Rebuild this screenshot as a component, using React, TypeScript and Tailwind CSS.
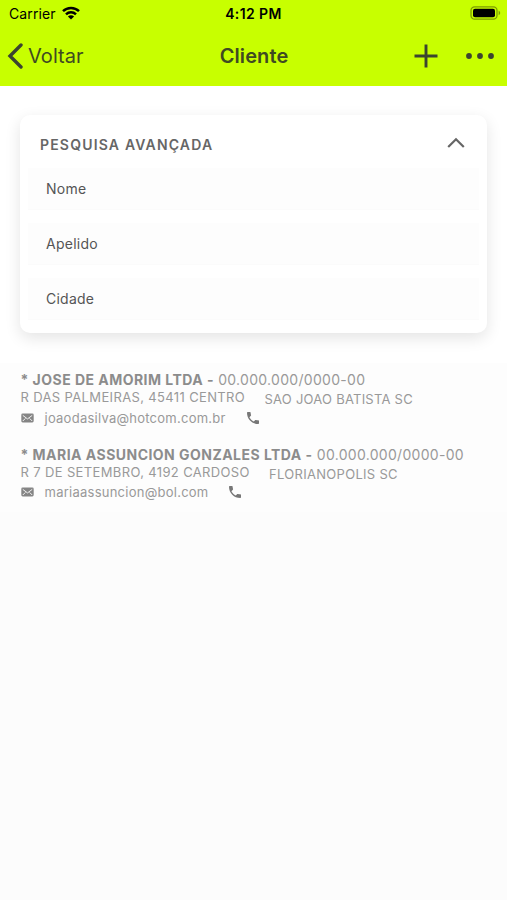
import React from "react";

const clients = [
  {
    name: "* JOSE DE AMORIM LTDA -",
    document: "00.000.000/0000-00",
    address: "R DAS PALMEIRAS, 45411 CENTRO",
    addressStyle: "w-[244px] tracking-[0.36px]",
    city: "SAO JOAO BATISTA SC",
    cityStyle: "tracking-[0.24px]",
    email: "joaodasilva@hotcom.com.br",
    emailStyle: "w-[202px] tracking-[0.25px]",
  },
  {
    name: "* MARIA ASSUNCION GONZALES LTDA -",
    document: "00.000.000/0000-00",
    address: "R 7 DE SETEMBRO, 4192 CARDOSO",
    addressStyle: "w-[248.5px] tracking-[0.36px]",
    city: "FLORIANOPOLIS SC",
    cityStyle: "tracking-[0.3px]",
    email: "mariaassuncion@bol.com",
    emailStyle: "w-[184px] tracking-[0.25px]",
  },
];

const StatusBar = () => (
  <div className="grid h-[27px] grid-cols-3 items-center text-[14px] text-black">
    <div className="flex items-center gap-[6px] pl-[9px]">
      <span className="tracking-[0.1px]">Carrier</span>
      <svg className="mb-[2px]" width="18" height="14" viewBox="0 0 18 14" fill="none" stroke="currentColor" strokeWidth="2.5">
        <path d="M1 5.2C5.4.9 12.6.9 17 5.2" />
        <path d="M4 8.3C6.8 5.6 11.2 5.6 14 8.3" />
        <path d="M9 13.6 5.9 10.5C7.6 8.9 10.4 8.9 12.1 10.5Z" fill="currentColor" stroke="none" />
      </svg>
    </div>
    <span className="text-center font-semibold tracking-[0.4px]">4:12 PM</span>
    <svg className="mr-[6px] mb-[1px] justify-self-end" width="31" height="14" viewBox="0 0 31 14">
      <rect x="1" y=".8" width="26" height="12.4" rx="3.6" fill="none" stroke="#7d9d00" strokeWidth="1.3" />
      <rect x="3" y="2.7" width="22" height="8.6" rx="2" fill="#000" />
      <path d="M28.6 4.8C30.7 5.5 30.7 8.5 28.6 9.2Z" fill="#7d9d00" />
    </svg>
  </div>
);

const NavBar = () => (
  <div className="grid h-[58px] grid-cols-3 items-center text-[#3f4a22]">
    <div className="flex items-center gap-[5px] pl-[7px]">
      <svg width="16" height="26" viewBox="0 0 16 26" fill="none" stroke="#3b4430" strokeWidth="3.4" strokeLinecap="round">
        <path d="M14 2 3 13 14 24" />
      </svg>
      <span className="text-[20px] tracking-[0.05px]">Voltar</span>
    </div>
    <span className="pl-[1px] text-center text-[20px] font-semibold tracking-[0.1px]">Cliente</span>
    <div className="flex items-center gap-[27px] justify-self-end pr-[12px]">
      <svg width="24" height="24" viewBox="0 0 24 24" stroke="#3b4430" strokeWidth="2.9">
        <path d="M12 .5V23.5M.5 12H23.5" />
      </svg>
      <svg width="30" height="8" viewBox="0 0 30 8" fill="#3b4430">
        <circle cx="4" cy="4" r="2.9" />
        <circle cx="15" cy="4" r="2.9" />
        <circle cx="26" cy="4" r="2.9" />
      </svg>
    </div>
  </div>
);

const Field = (props: { label: string }) => (
  <div className="mx-[8px] mb-[13px] flex h-[42px] items-center border-b border-[#fbfbfb] bg-[#fdfdfd] pl-[18px] text-[14px] tracking-[0.25px] text-[#555]">
    {props.label}
  </div>
);

const SearchCard = () => (
  <div className="mx-[20px] mt-[29px] h-[218px] rounded-[10px] bg-white shadow-[0_5px_16px_rgba(0,0,0,0.11)]">
    <div className="flex h-[53px] items-center justify-between pt-[6px] pr-[22px] pl-[20px]">
      <span className="text-[14px] font-semibold tracking-[1.18px] text-[#666]">PESQUISA AVANÇADA</span>
      <svg className="mb-[4px]" width="18" height="12" viewBox="0 0 18 12" fill="none" stroke="#666" strokeWidth="2.2">
        <path d="M1.2 10 9 2.2 16.8 10" />
      </svg>
    </div>
    <Field label="Nome" />
    <Field label="Apelido" />
    <Field label="Cidade" />
  </div>
);

const Client = (props: any) => {
  const { name, document, address, addressStyle, city, cityStyle, email, emailStyle } = props.client;
  return (
    <div className="h-[74.5px] pt-[8px] pl-[20.5px] whitespace-nowrap text-[#999]">
      <div className="h-[17px] text-[14px] leading-[18px] tracking-[0.3px]">
        <span className="font-bold tracking-[0.47px] text-[#8c8c8c]">{name}</span> <span>{document}</span>
      </div>
      <div className="flex h-[19px] text-[13px] leading-[18px]">
        <span className={addressStyle}>{address}</span>
        <span className={"pt-[2px] " + cityStyle}>{city}</span>
      </div>
      <div className="flex h-[22px] items-center pt-[1px] text-[13px]">
        <svg className="mr-[11px] mb-[2px]" width="13" height="10" viewBox="0 0 13 10">
          <rect x=".3" y=".5" width="12.4" height="9" rx="1.4" fill="#858585" />
          <path d="M1.8 2.4 6.5 5.9 11.2 2.4M1.8 8 4.4 5.4M11.2 8 8.6 5.4" fill="none" stroke="#fcfcfc" strokeWidth=".9" />
        </svg>
        <span className={emailStyle}>{email}</span>
        <svg className="mb-[2px]" width="12" height="12" viewBox="3 3 18 18" fill="#777">
          <path d="M6.62 10.79c1.44 2.83 3.76 5.14 6.59 6.59l2.2-2.2c.27-.27.67-.36 1.02-.24 1.12.37 2.33.57 3.57.57.55 0 1 .45 1 1V20c0 .55-.45 1-1 1-9.39 0-17-7.61-17-17 0-.55.45-1 1-1h3.5c.55 0 1 .45 1 1 0 1.25.2 2.45.57 3.57.11.35.03.74-.25 1.02l-2.2 2.2z" />
        </svg>
      </div>
    </div>
  );
};

const App = () => {
  return (
    <div className="flex h-[900px] w-full flex-col overflow-hidden bg-[#fcfcfc] font-[Inter,sans-serif]">
      <div className="h-[86px] shrink-0 bg-[#c8ff00]">
        <StatusBar />
        <NavBar />
      </div>
      <div className="flow-root h-[277px] shrink-0 bg-white">
        <SearchCard />
      </div>
      <div className="h-[149px] shrink-0 bg-[#fdfdfd]">
        {clients.map((client) => (
          <Client key={client.email} client={client} />
        ))}
      </div>
    </div>
  );
};

export default App;
